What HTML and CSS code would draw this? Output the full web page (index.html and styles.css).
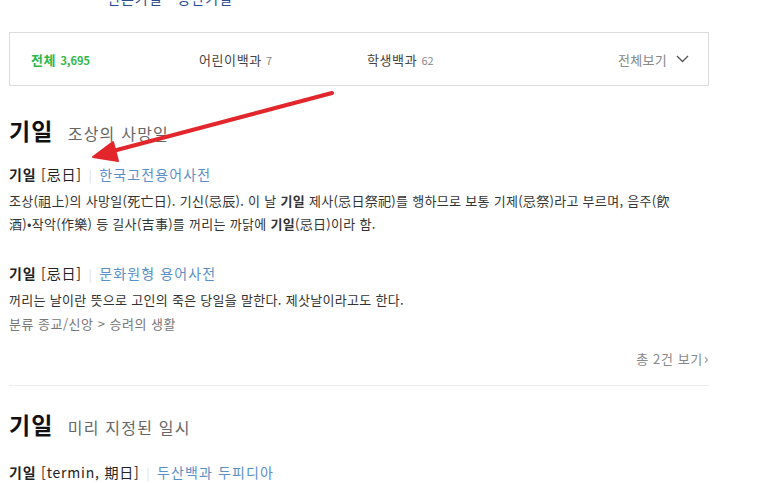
FILE: index.html
```html
<!DOCTYPE html>
<html lang="ko">
<head>
  <meta charset="UTF-8" />
  <title>기일 : 지식백과</title>
  <link rel="stylesheet" href="styles.css">
</head>
<body>
  <div class="page">
    <div class="related">
      <a href="#">변론기일</a>
      <a href="#">공판기일</a>
    </div>

    <div class="tabs">
      <a class="tab tab-on" href="#">전체 <em>3,695</em></a>
      <a class="tab" href="#">어린이백과 <em>7</em></a>
      <a class="tab" href="#">학생백과 <em>62</em></a>
      <a class="tab-all" href="#">전체보기
        <svg width="13" height="8" viewBox="0 0 13 8"><path d="M1 1l5.5 5.5L12 1" fill="none" stroke="#555" stroke-width="1.3"/></svg>
      </a>
    </div>

    <div class="group">
      <h2 class="word">기일 <span class="sense">조상의 사망일</span></h2>

      <div class="entry">
        <div class="entry-title"><strong>기일</strong> [忌日] <span class="bar">|</span> <a href="#">한국고전용어사전</a></div>
        <p class="desc">조상(祖上)의 사망일(死亡日). 기신(忌辰). 이 날 <b>기일</b> 제사(忌日祭祀)를 행하므로 보통 기제(忌祭)라고 부르며, 음주(飮酒)•작악(作樂) 등 길사(吉事)를 꺼리는 까닭에 <b>기일</b>(忌日)이라 함.</p>
      </div>

      <div class="entry">
        <div class="entry-title"><strong>기일</strong> [忌日] <span class="bar">|</span> <a href="#">문화원형 용어사전</a></div>
        <p class="desc">꺼리는 날이란 뜻으로 고인의 죽은 당일을 말한다. 제삿날이라고도 한다.</p>
        <p class="cat">분류 종교/신앙 &gt; 승려의 생활</p>
      </div>

      <div class="more"><a href="#">총 2건 보기<span class="chev">›</span></a></div>
    </div>

    <div class="group">
      <h2 class="word">기일 <span class="sense">미리 지정된 일시</span></h2>
      <div class="entry">
        <div class="entry-title"><strong>기일</strong> [termin, 期日] <span class="bar">|</span> <a href="#">두산백과 두피디아</a></div>
      </div>
    </div>

    <svg class="arrow" width="340" height="80" viewBox="0 0 340 80">
      <line x1="323" y1="3" x2="104" y2="61" stroke="#e3262b" stroke-width="4" stroke-linecap="round"/>
      <polygon points="84,67 104,52 109,71" fill="#e3262b" stroke="#e3262b" stroke-width="2" stroke-linejoin="round"/>
    </svg>
  </div>
</body>
</html>
```

FILE: styles.css
```css
* {
  margin: 0;
  padding: 0;
  box-sizing: border-box;
}

body {
  font-family: "Noto Sans CJK KR", "Noto Sans", sans-serif;
  color: #333;
  background: #fff;
  letter-spacing: 1px;
  overflow: hidden;
}

a {
  text-decoration: none;
}

.page {
  position: relative;
  width: 700px;
  margin-left: 9px;
  padding-top: 1px;
}

/* related words, scrolled off the top */
.related {
  margin-top: -13px;
  padding-left: 98px;
  height: 20px;
  font-size: 14px;
  line-height: 20px;
}

.related a {
  color: #2a4b8d;
  margin-right: 10px;
}

/* collection tabs */
.tabs {
  display: flex;
  align-items: center;
  height: 54px;
  margin-top: 24px;
  border: 1px solid #dcdcdc;
  padding: 0 21px;
  font-size: 13px;
  letter-spacing: 0.6px;
}

.tab {
  color: #444;
  width: 168px;
}

.tab em {
  font-style: normal;
  font-size: 11px;
  color: #888;
  letter-spacing: 0;
}

.tab-on {
  color: #2db84b;
  font-weight: bold;
}

.tab-on em {
  color: #2db84b;
}

.tab-all {
  margin-left: auto;
  margin-right: -2px;
  color: #888;
  display: flex;
  align-items: center;
  gap: 9px;
  letter-spacing: 0.3px;
}

/* word groups */
.group {
  padding-top: 28px;
  padding-bottom: 17px;
}

.group + .group {
  border-top: 1px solid #ececec;
  padding-top: 22px;
}

.word {
  font-size: 23px;
  font-weight: bold;
  color: #111;
  line-height: 32px;
}

.sense {
  font-size: 16px;
  font-weight: normal;
  color: #666;
  margin-left: 7px;
  letter-spacing: 1.2px;
}

.entry {
  margin-top: 14px;
}

.entry + .entry {
  margin-top: 27px;
}

.group + .group .entry {
  margin-top: 18px;
}

.entry-title {
  font-size: 14px;
  line-height: 22px;
  color: #222;
  letter-spacing: 0.8px;
}

.entry-title a {
  color: #5b8fc7;
  letter-spacing: 1.1px;
}

.bar {
  color: #ddd;
  font-size: 12px;
  margin: 0 2px;
}

.desc {
  max-width: 668px;
  font-size: 13px;
  line-height: 23px;
  margin-top: 3px;
  color: #333;
  letter-spacing: 0.3px;
}

.cat {
  font-size: 13px;
  line-height: 23px;
  color: #777;
  margin-top: 1px;
  letter-spacing: 0.5px;
}

.more {
  text-align: right;
  margin-top: 12px;
  font-size: 13px;
  letter-spacing: 0.6px;
}

.more a {
  color: #888;
}

.chev {
  font-size: 15px;
  margin-left: 1px;
}

/* annotation drawn over the page */
.arrow {
  position: absolute;
  left: 0;
  top: 90px;
}
```
